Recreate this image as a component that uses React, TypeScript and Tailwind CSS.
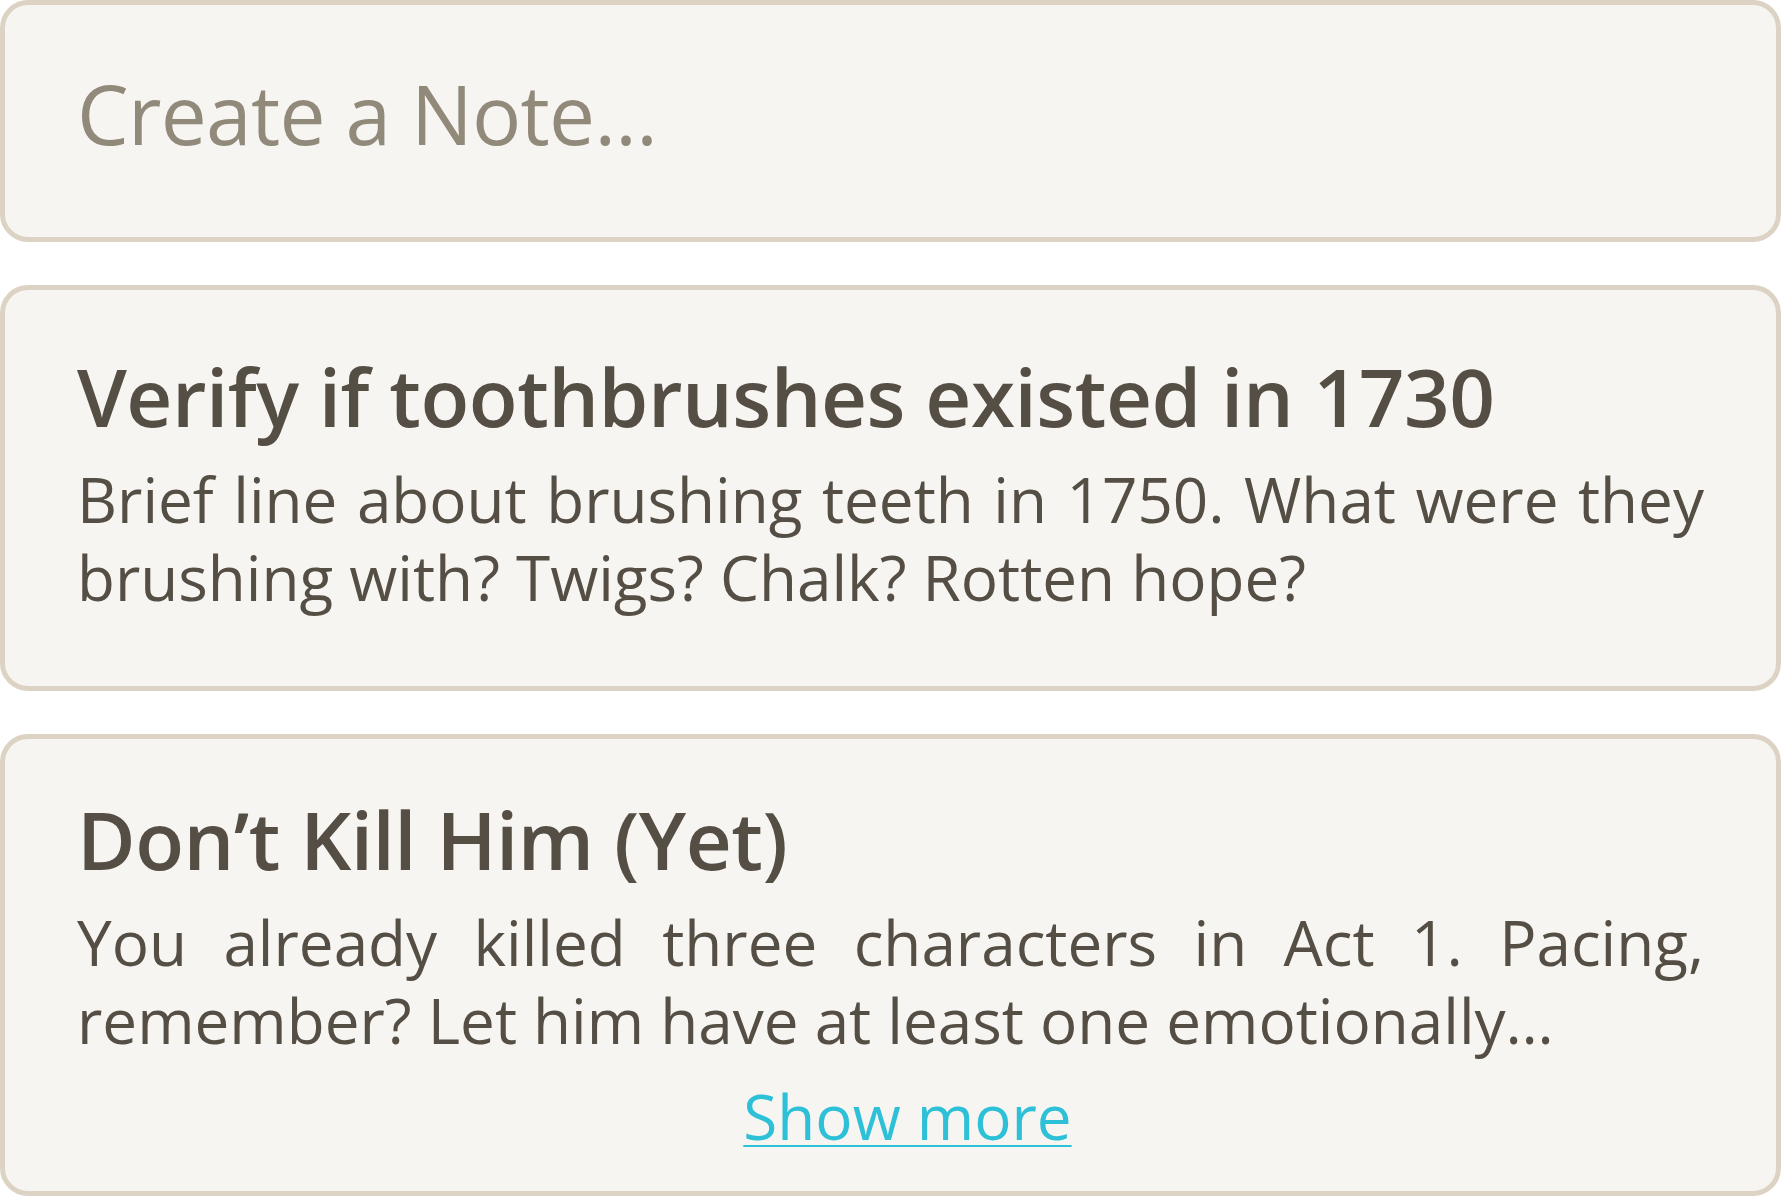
import React from 'react';

const font = { fontFamily: '"Open Sans", "Noto Sans", Arial, sans-serif' };

interface Note {
    title: string;
    body: string;
    truncated?: boolean;
}

const notes: Note[] = [
    {
        title: 'Verify if toothbrushes existed in 1730',
        body: 'Brief line about brushing teeth in 1750. What were they brushing with? Twigs? Chalk? Rotten hope?'
    },
    {
        title: 'Don’t Kill Him (Yet)',
        body: 'You already killed three characters in Act 1. Pacing, remember? Let him have at least one emotionally…',
        truncated: true
    }
];

function NoteCard({ note }: { note: Note }) {
    return (
        <div className={`bg-[#f7f5f2] border-[5px] border-[#dcd3c4] rounded-[28px] px-[72px] ${note.truncated ? 'pt-[52px] pb-[36px]' : 'pt-[58px] pb-[70px]'}`}>
            <h2 className="text-[80px] leading-[96px] font-semibold tracking-[-0.5px] text-[#554e45]">{note.title}</h2>
            <p className="mt-4 text-[62px] leading-[78px] text-[#554e45] text-justify">{note.body}</p>
            {note.truncated && (
                <div className="mt-[18px] flex justify-center pl-[34px]">
                    <button className="text-[62px] leading-[78px] text-[#2ec0d6] underline decoration-2 underline-offset-[5px] cursor-pointer">
                        Show more
                    </button>
                </div>
            )}
        </div>
    );
}

export default function App() {
    return (
        <div className="w-[1781px] min-h-[1201px] bg-white flex flex-col gap-[43px]" style={font}>
            {/* New note input */}
            <div className="bg-[#f7f5f2] border-[5px] border-[#dcd3c4] rounded-[28px] px-[72px] pt-[60px] pb-[76px]">
                <input
                    type="text"
                    placeholder="Create a Note..."
                    className="w-full h-[96px] bg-transparent outline-none text-[82px] leading-[96px] tracking-[-0.7px] text-[#554e45] placeholder:text-[#918a7a]"
                />
            </div>

            {notes.map((note, i) => (
                <NoteCard key={i} note={note} />
            ))}
        </div>
    );
}
